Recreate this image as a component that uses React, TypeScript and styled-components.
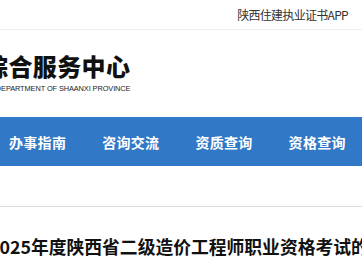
import React from "react";
import styled, { createGlobalStyle } from "styled-components";

const GlobalStyle = createGlobalStyle`
  html, body {
    margin: 0;
    padding: 0;
    background: #fff;
    overflow: hidden;
  }
  body {
    font-family: "Noto Sans CJK SC", "Noto Sans", sans-serif;
  }
`;

const Page = styled.div`
  width: 362px;
  overflow: hidden;
`;

const TopBar = styled.div`
  height: 29px;
  border-bottom: 1px solid #eeeeee;
  display: flex;
  align-items: center;
  justify-content: flex-end;
  padding-right: 14px;
`;

const TopLink = styled.a`
  font-size: 12px;
  color: #333;
  text-decoration: none;
  letter-spacing: -0.7px;
`;

const Header = styled.div`
  height: 87px;
  display: flex;
  align-items: center;
`;

const Logo = styled.div`
  margin-left: -16px;
  margin-top: -2px;
  display: flex;
  flex-direction: column;
  align-items: flex-end;
`;

const LogoTitle = styled.div`
  font-size: 24px;
  font-weight: 900;
  color: #111;
  line-height: 26px;
  letter-spacing: 0.4px;
`;

const LogoSub = styled.div`
  font-family: "Liberation Sans Narrow", "Liberation Sans", sans-serif;
  font-size: 7.4px;
  color: #222;
  line-height: 9px;
  letter-spacing: -0.1px;
  white-space: nowrap;
  margin-top: 5px;
`;

const Nav = styled.nav`
  height: 49px;
  background: #3178c6;
  display: flex;
  align-items: center;
  padding-left: 9px;
  gap: 36px;
`;

const NavItem = styled.a`
  color: #fff;
  font-size: 14px;
  font-weight: 700;
  text-decoration: none;
  white-space: nowrap;
  letter-spacing: 0.3px;
`;

const Divider = styled.div`
  margin-top: 40px;
  border-top: 1px solid #dddddd;
`;

const Title = styled.h1`
  margin: 27px 0 0 -11px;
  font-size: 17.8px;
  font-weight: 700;
  color: #111;
  white-space: nowrap;
  line-height: 24px;
`;

const navItems = ["办事指南", "咨询交流", "资质查询", "资格查询"];

export default function App() {
  return (
    <Page>
      <GlobalStyle />
      <TopBar>
        <TopLink href="#">陕西住建执业证书APP</TopLink>
      </TopBar>
      <Header>
        <Logo>
          <LogoTitle>综合服务中心</LogoTitle>
          <LogoSub>DEPARTMENT OF SHAANXI PROVINCE</LogoSub>
        </Logo>
      </Header>
      <Nav>
        {navItems.map((item) => (
          <NavItem key={item} href="#">
            {item}
          </NavItem>
        ))}
      </Nav>
      <Divider />
      <Title>2025年度陕西省二级造价工程师职业资格考试的通知</Title>
    </Page>
  );
}
